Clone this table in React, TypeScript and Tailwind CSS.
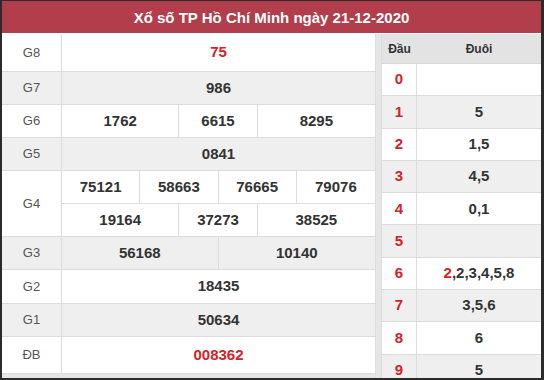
import React from 'react';

type Cell = { value: string; span: string; red?: boolean };

const ROWS: { label: string; lines: Cell[][]; gray: boolean; h: string }[] = [
  { label: 'G8', lines: [[{ value: '75', span: 'col-span-8', red: true }]], gray: false, h: 'h-[37px]' },
  { label: 'G7', lines: [[{ value: '986', span: 'col-span-8' }]], gray: true, h: 'h-[32px]' },
  {
    label: 'G6',
    lines: [[
      { value: '1762', span: 'col-span-3' },
      { value: '6615', span: 'col-span-2' },
      { value: '8295', span: 'col-span-3' },
    ]],
    gray: false,
    h: 'h-[32px]',
  },
  { label: 'G5', lines: [[{ value: '0841', span: 'col-span-8' }]], gray: true, h: 'h-[32px]' },
  {
    label: 'G4',
    lines: [
      [
        { value: '75121', span: 'col-span-2' },
        { value: '58663', span: 'col-span-2' },
        { value: '76665', span: 'col-span-2' },
        { value: '79076', span: 'col-span-2' },
      ],
      [
        { value: '19164', span: 'col-span-3' },
        { value: '37273', span: 'col-span-2' },
        { value: '38525', span: 'col-span-3' },
      ],
    ],
    gray: false,
    h: 'h-[32px]',
  },
  {
    label: 'G3',
    lines: [[
      { value: '56168', span: 'col-span-4' },
      { value: '10140', span: 'col-span-4' },
    ]],
    gray: true,
    h: 'h-[32px]',
  },
  { label: 'G2', lines: [[{ value: '18435', span: 'col-span-8' }]], gray: false, h: 'h-[33px]' },
  { label: 'G1', lines: [[{ value: '50634', span: 'col-span-8' }]], gray: true, h: 'h-[32px]' },
  { label: 'ĐB', lines: [[{ value: '008362', span: 'col-span-8', red: true }]], gray: false, h: 'h-[36px]' },
];

const LOTO: string[] = ['', '5', '1,5', '4,5', '0,1', '', '2,2,3,4,5,8', '3,5,6', '6', '5'];

export default function App() {
  return (
    <div
      className="w-[544px] h-[380px] bg-[#2b2b2b] pt-px pl-[2px] pr-[3px] pb-[2px] flex flex-col overflow-hidden"
      style={{ fontFamily: '"Liberation Sans", Arial, sans-serif' }}
    >
      {/* Title bar */}
      <div className="h-[33px] shrink-0 bg-[#b23d4b] flex items-center justify-center border-b border-white">
        <h1 className="text-white font-bold text-[15px] leading-none">Xổ số TP Hồ Chí Minh ngày 21-12-2020</h1>
      </div>

      <div className="flex-1 min-h-0 flex gap-[5px] bg-[#e6e6e6] overflow-hidden">
        {/* Prize table */}
        <div className="w-[374px] shrink-0 flex flex-col border-r border-[#dcdcdc]">
          {ROWS.map(row => (
            <div
              key={row.label}
              className={`flex border-b border-[#dcdcdc] ${row.gray ? 'bg-[#efefef]' : 'bg-white'}`}
            >
              <div className="w-[60px] shrink-0 flex items-center justify-center border-r border-[#dcdcdc] text-[13px] text-[#555]">
                {row.label}
              </div>
              <div className="flex-1 flex flex-col">
                {row.lines.map((line, i) => (
                  <div
                    key={i}
                    className={`grid grid-cols-8 ${row.h} ${i < row.lines.length - 1 ? 'border-b border-[#dcdcdc] box-content' : ''}`}
                  >
                    {line.map((c, j) => (
                      <div
                        key={j}
                        className={`${c.span} flex items-center justify-center font-bold text-[15px] ${j < line.length - 1 ? 'border-r border-[#dcdcdc]' : ''} ${c.red ? 'text-[#d3222a]' : 'text-[#333]'}`}
                      >
                        {c.value}
                      </div>
                    ))}
                  </div>
                ))}
              </div>
            </div>
          ))}
        </div>

        {/* Loto head/tail table */}
        <div className="w-[160px] shrink-0 flex flex-col border-l border-[#dcdcdc]">
          <div className="h-[30px] shrink-0 flex bg-[#e3e3e3] border-b border-[#d6d6d6] text-[12px] font-bold text-[#333]">
            <div className="w-[35px] flex items-center justify-center">Đầu</div>
            <div className="flex-1 flex items-center justify-center">Đuôi</div>
          </div>
          {LOTO.map((tail, i) => (
            <div
              key={i}
              className={`h-[32.3px] shrink-0 flex border-b border-[#dcdcdc] ${i % 2 === 1 ? 'bg-[#efefef]' : 'bg-white'}`}
            >
              <div className="w-[35px] shrink-0 flex items-center justify-center border-r border-[#dcdcdc] font-bold text-[15px] text-[#d3222a]">
                {i}
              </div>
              <div className="flex-1 flex items-center justify-center font-bold text-[15px] text-[#333]">
                {i === 6 ? (
                  <>
                    <span className="text-[#d3222a]">2</span>
                    {tail.slice(1)}
                  </>
                ) : (
                  tail
                )}
              </div>
            </div>
          ))}
        </div>
      </div>
    </div>
  );
}
